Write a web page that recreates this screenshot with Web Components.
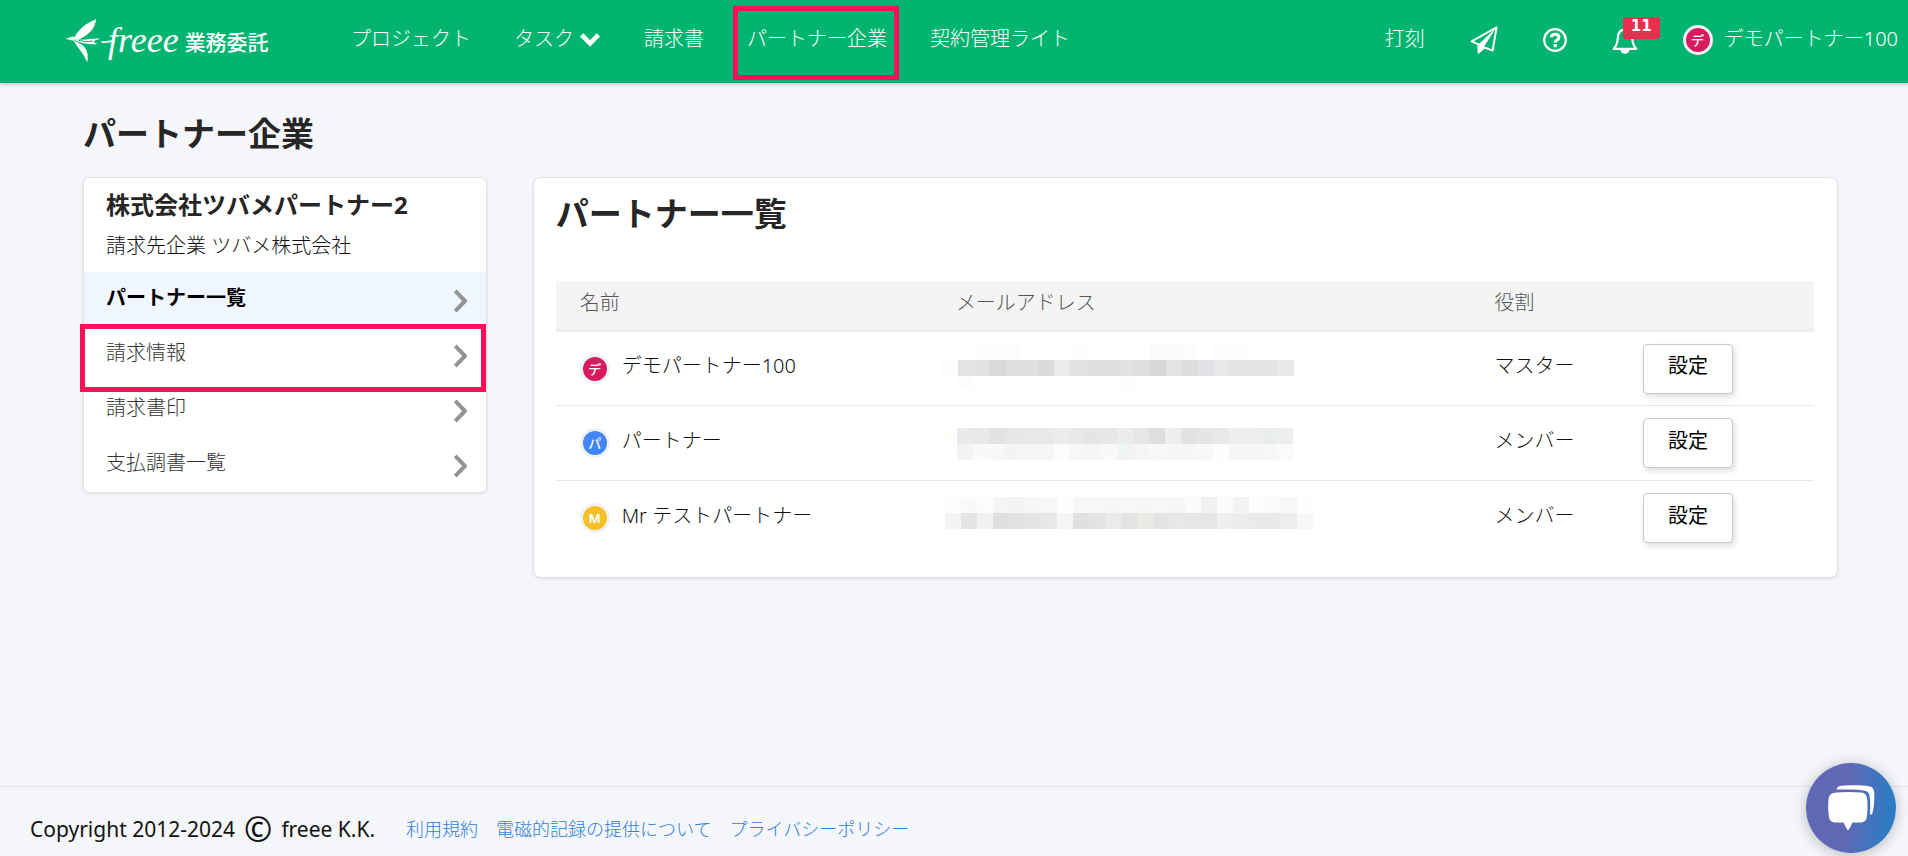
<!DOCTYPE html>
<html lang="ja">
<head>
<meta charset="utf-8">
<title>パートナー企業</title>
<style>
    :root {
        --green: #02b470;
        --mark: #ff0f59;
        --text: #111;
        --muted: #333;
        --line: #e8e8e8;
    }

    body {
        margin: 0;
        min-height: 100vh;
        display: flex;
        flex-direction: column;
        background: #f5f6fa;
        color: var(--text);
        font: 300 20px/30px "Noto Sans", "Noto Sans CJK JP", sans-serif;
    }

    main {
        flex: 1;
        padding: 32px 70px 32px 83px;
    }

    h1 {
        margin: 0 0 24px;
        color: #262626;
        font-size: 33px;
        line-height: 38px;
    }

    .columns {
        display: flex;
        align-items: flex-start;
        justify-content: space-between;
    }

    side-menu {
        flex: 0 0 23%;
    }

    content-card {
        flex: 1;
        margin-left: 46px;
    }
</style>
</head>
<body>
    <app-header>
        <nav-link>プロジェクト</nav-link>
        <nav-link dropdown>タスク</nav-link>
        <nav-link>請求書</nav-link>
        <nav-link marked>パートナー企業</nav-link>
        <nav-link>契約管理ライト</nav-link>
    </app-header>

    <main>
        <h1>パートナー企業</h1>
        <div class="columns">
            <side-menu>
                <span slot="title">株式会社ツバメパートナー2</span>
                <span slot="sub">請求先企業 ツバメ株式会社</span>
                <side-menu-item active>パートナー一覧</side-menu-item>
                <side-menu-item marked>請求情報</side-menu-item>
                <side-menu-item>請求書印</side-menu-item>
                <side-menu-item>支払調書一覧</side-menu-item>
            </side-menu>
            <content-card>
                <span slot="title">パートナー一覧</span>
                <partner-table></partner-table>
            </content-card>
        </div>
    </main>

    <app-footer></app-footer>
    <chat-launcher></chat-launcher>

<script>
/**
 * Small base class: every element sets its shadow root from template()
 */
class BaseElement extends HTMLElement {

    constructor() {
        super();
        this.attachShadow({ mode: 'open' });
    }

    connectedCallback() {
        this.shadowRoot.innerHTML = this.template();
    }
}

// icons, all drawn in currentColor
const ICONS = {
    down: {
        size: [22, 15],
        body: '<path d="M2.6 2.8 11 11.4 19.4 2.8" fill="none" stroke="currentColor" stroke-width="4.6"/>'
    },
    right: {
        size: [14, 22],
        body: '<path d="M2.6 2.4 11 11 2.6 19.6" fill="none" stroke="currentColor" stroke-width="4" stroke-linejoin="round" stroke-linecap="square"/>'
    },
    send: {
        size: [28, 28],
        body: `<path d="M1.6 15.4 26.6 1.4 22.6 24.6 14.4 21.4 8.6 26.6 8.4 18.4Z" fill="none" stroke="currentColor" stroke-width="2" stroke-linejoin="round"/>
            <path d="M8.4 18.6 26 2 13.4 21.4 8.8 27Z" fill="currentColor"/>`
    },
    help: {
        size: [24, 24],
        body: `<circle cx="12" cy="12" r="10.8" fill="none" stroke="currentColor" stroke-width="2.2"/>
            <path d="M8.2 9.4C8.4 7.2 10 6.2 12 6.2c2.3 0 4 1.2 4 3.2 0 2.6-3.8 2.7-3.8 5.2" fill="none" stroke="currentColor" stroke-width="3"/>
            <rect x="10.5" y="16" width="3.4" height="3.2" rx=".6" fill="currentColor"/>`
    },
    bell: {
        size: [26, 28],
        body: `<path d="M13 3.6c-5 0-7 3.6-7.2 8.4-.2 5-1.4 8-4 10.8h22.4c-2.6-2.8-3.8-5.8-4-10.8C20 7.2 18 3.6 13 3.6Z" fill="none" stroke="currentColor" stroke-width="2.2" stroke-linejoin="round"/>
            <path d="M13 1v3" stroke="currentColor" stroke-width="2.6" stroke-linecap="round"/>
            <path d="M8.4 23.4h9.2a4.6 4.3 0 0 1-9.2 0Z" fill="currentColor"/>`
    }
};

class UiIcon extends BaseElement {
    template() {
        const icon = ICONS[this.getAttribute('name')];
        const [w, h] = icon.size;
        return `
            <style>
                :host { display: inline-flex; flex: none; }
                svg { display: block; overflow: visible; }
            </style>
            <svg width="${w}" height="${h}" viewBox="0 0 ${w} ${h}" aria-hidden="true">${icon.body}</svg>
        `;
    }
}

class UserAvatar extends BaseElement {
    template() {
        return `
            <style>
                :host {
                    display: inline-flex;
                    flex: none;
                    align-items: center;
                    justify-content: center;
                    box-sizing: border-box;
                    width: 30px;
                    height: 30px;
                    border: 3px solid #f0f2f3;
                    border-radius: 50%;
                    background: ${this.getAttribute('color')};
                    color: #fff;
                    font-size: 13px;
                    font-weight: 500;
                    line-height: 20px;
                }
                :host([bold]) { font-weight: 700; }
            </style>
            <slot></slot>
        `;
    }
}

class BrandLogo extends BaseElement {
    template() {
        return `
            <style>
                :host { display: block; }
                a {
                    display: flex;
                    align-items: center;
                    color: #fff;
                    text-decoration: none;
                }
                svg { display: block; overflow: visible; }
                .script {
                    font: italic 36px/40px "Liberation Serif", serif;
                    margin-left: -6px;
                    padding-bottom: 3px;
                }
                .product {
                    font-size: 21px;
                    font-weight: 500;
                    line-height: 30px;
                    margin-left: 6px;
                }
            </style>
            <a href="#">
                <svg width="48" height="45" viewBox="18 32 144 135" aria-hidden="true">
                    <g fill="#fff">
                        <path d="M44 86C56 62 80 44 108 33 105 58 90 78 60 92L48 94Z"/>
                        <path d="M17 91 32 86Q42 82 48 90L42 97Q30 96 17 91Z"/>
                        <path d="M40 95C48 100 56 104 64 108 82 120 86 140 82 162 72 138 56 122 40 95Z"/>
                        <path d="M50 92C72 98 96 88 121 91 100 97 94 100 113 107 92 109 66 108 44 95Z"/>
                    </g>
                    <path d="M56 96Q76 103 98 98" fill="none" stroke="#02b470" stroke-width="3"/>
                    <path d="M124 101Q142 102 164 97" fill="none" stroke="#fff" stroke-width="5"/>
                </svg>
                <span class="script">freee</span>
                <span class="product">業務委託</span>
            </a>
        `;
    }
}

class NavLink extends BaseElement {
    template() {
        return `
            <style>
                :host { display: block; position: relative; }
                a {
                    display: flex;
                    align-items: center;
                    gap: 5px;
                    color: #fff;
                    text-decoration: none;
                    white-space: nowrap;
                }
                /* frame around the highlighted entry */
                :host([marked])::after {
                    content: "";
                    position: absolute;
                    inset: -18px -12px -26px -14px;
                    border: 5px solid var(--mark);
                    pointer-events: none;
                }
            </style>
            <a href="#"><slot></slot>${this.hasAttribute('dropdown') ? '<ui-icon name="down"></ui-icon>' : ''}</a>
        `;
    }
}

class AppHeader extends BaseElement {
    template() {
        return `
            <style>
                :host {
                    display: flex;
                    align-items: center;
                    box-sizing: border-box;
                    height: 83px;
                    padding: 0 10px 0 66px;
                    background: var(--green);
                    color: #fff;
                    box-shadow: 0 1px 4px rgba(0, 0, 0, .25);
                }
                brand-logo { width: 285px; }
                nav {
                    display: flex;
                    gap: 43px;
                    padding-bottom: 5px;
                }
                .tools {
                    display: flex;
                    align-items: center;
                    gap: 45px;
                    margin-left: auto;
                    padding-bottom: 4px;
                }
                a {
                    display: flex;
                    align-items: center;
                    color: inherit;
                    text-decoration: none;
                    white-space: nowrap;
                }
                .label { padding-bottom: 2px; }
                .bell { position: relative; }
                .badge {
                    position: absolute;
                    left: 11px;
                    top: -9px;
                    width: 37px;
                    height: 22px;
                    border-radius: 3px;
                    background: #e72f4e;
                    font: 700 15px/18px "DejaVu Sans", sans-serif;
                    text-align: center;
                }
                .user { gap: 11px; }
            </style>
            <brand-logo></brand-logo>
            <nav><slot></slot></nav>
            <div class="tools">
                <a href="#"><span class="label">打刻</span></a>
                <a href="#" aria-label="send"><ui-icon name="send"></ui-icon></a>
                <a href="#" aria-label="help"><ui-icon name="help"></ui-icon></a>
                <a href="#" class="bell"><ui-icon name="bell"></ui-icon><span class="badge">11</span></a>
                <a href="#" class="user">
                    <user-avatar color="#d81b60">デ</user-avatar>
                    <span class="label">デモパートナー100</span>
                </a>
            </div>
        `;
    }
}

class SideMenu extends BaseElement {
    template() {
        return `
            <style>
                :host {
                    display: block;
                    box-sizing: border-box;
                    border: 1px solid #e1e2e6;
                    border-radius: 6px;
                    background: #fff;
                    box-shadow: 0 1px 3px rgba(0, 0, 0, .1);
                }
                header { padding: 11px 22px 10px; }
                h2 {
                    margin: 0 0 9px;
                    color: #262626;
                    font-size: 24px;
                    line-height: 32px;
                }
                p { margin: 0; line-height: 32px; }
            </style>
            <header>
                <h2><slot name="title"></slot></h2>
                <p><slot name="sub"></slot></p>
            </header>
            <nav><slot></slot></nav>
        `;
    }
}

class SideMenuItem extends BaseElement {
    template() {
        return `
            <style>
                :host { display: block; position: relative; }
                a {
                    display: flex;
                    align-items: center;
                    justify-content: space-between;
                    box-sizing: border-box;
                    height: 55px;
                    padding: 3px 18px 0 22px;
                    color: var(--muted);
                    text-decoration: none;
                }
                span { padding-bottom: 6px; }
                ui-icon { color: #939393; }
                :host([active]) a {
                    background: #eff6ff;
                    color: #000;
                    font-weight: 700;
                }
                :host([marked]) { z-index: 1; }
                :host([marked])::after {
                    content: "";
                    position: absolute;
                    inset: -3px 0 -10px -4px;
                    border: 5px solid var(--mark);
                    pointer-events: none;
                }
            </style>
            <a href="#"><span><slot></slot></span><ui-icon name="right"></ui-icon></a>
        `;
    }
}

class ContentCard extends BaseElement {
    template() {
        return `
            <style>
                :host {
                    display: block;
                    box-sizing: border-box;
                    padding: 16px 23px 21px 22px;
                    border: 1px solid #e1e2e6;
                    border-radius: 8px;
                    background: #fff;
                    box-shadow: 0 1px 3px rgba(0, 0, 0, .1);
                }
                h2 {
                    margin: 0 0 47px;
                    color: #262626;
                    font-size: 33px;
                    line-height: 40px;
                }
            </style>
            <h2><slot name="title"></slot></h2>
            <slot></slot>
        `;
    }
}

/**
 * Mosaic over a hidden mail address.
 * Each row of tiles is a list of hex colours, "." leaves a tile out.
 */
const MOSAICS = [
    {
        x: 0, y: 0,
        rows: [
            '. . fdfdfd fcfcfc fcfcfc . . . fdfdfd . . . . fafafa fbfbfb fcfcfa . fcfcfc fcfefe',
            'fcfcfa e3e3e3 e2e2e2 d9d9d9 dfdfdf dfdfdf dddbda eaecee e3e2e0 dee1e0 dfdfdd dfe2e1 dedede d8d8d8 e5e4e2 dddddd e0e2e5 e8e8e8 e5e5e5 e5e5e5 e5e5e5 e7e9eb',
            '. fcfcfc . . . . . . . . . fdfdfd'
        ]
    },
    {
        x: -1, y: 10,
        rows: [
            'fefefb eaeaea e8e8e8 e3e2e0 e4e6e8 e8e8e6 e8e8e8 ececec e9e9e7 e5e5e5 e7e7e5 eaedec e6e6e6 dfdfdd eeeeee e2e2e2 e5e5e5 e9e9e9 eeeeee eeeeee e9edec edefee',
            '. f4f4f4 f9f9f9 f8f8f6 f4f4f4 f6f6f6 f6f6f6 fcfcfc f7f7f7 f6f6f6 f9f9f9 f0f4f2 f5f5f5 f8f8f8 f6f6f6 f6f6f6 f8f8f8 fbfefd f6f6f4 f6f6f6 f7f7f7 fafafa'
        ]
    },
    {
        x: 3, y: 4,
        rows: [
            'fdfdfd f9f9f9 fcfcfc f4f6f5 f3f3f3 f6f6f6 f6f8fa fefefe f7f7f7 f7f7f7 f6f6f6 f7f7f7 f8f6f5 f5f8f7 f6f6f6 fbfbfb eff2f1 fbfbfb f3f3f3 fdfdfd fafafa f7f7f7 fefefe',
            'f4f4f4 e4e4e4 f1f1f1 e0e0e0 e3e2e0 e5e5e3 e6e8ea f5f5f5 e0e0de e3e3e3 ebebeb e3e3e3 ebeae7 e4e4e4 e6e8ea e7e7e7 e4e7e6 efefed ececec eaeaea eaeaea edefee f6f8f7'
        ]
    }
];

class MaskedAddress extends BaseElement {
    template() {
        const mosaic = MOSAICS[this.getAttribute('index')];
        const tile = 16;
        let rects = '';
        mosaic.rows.forEach((row, r) => {
            row.split(' ').forEach((color, c) => {
                if (color === '.') return;
                rects += `<rect x="${mosaic.x + c * tile}" y="${mosaic.y + r * tile}" width="${tile}" height="${r === 2 ? 14 : tile}" fill="#${color}"/>`;
            });
        });
        return `
            <style>
                :host { display: block; }
                svg { display: block; overflow: visible; }
            </style>
            <svg width="371" height="50" shape-rendering="crispEdges" aria-hidden="true">${rects}</svg>
        `;
    }
}

class AppButton extends BaseElement {
    template() {
        return `
            <style>
                :host { display: block; }
                button {
                    display: block;
                    height: 50px;
                    padding: 0 24px 5px;
                    border: 1px solid #c8c8c8;
                    border-radius: 4px;
                    background: #fff;
                    box-shadow: 2px 3px 6px rgba(0, 0, 0, .13);
                    color: #000;
                    font: inherit;
                    font-weight: 400;
                    white-space: nowrap;
                }
            </style>
            <button type="button"><slot></slot></button>
        `;
    }
}

class PartnerTable extends BaseElement {

    constructor() {
        super();
        this.partners = [
            { initial: 'デ', color: '#d81b60', name: 'デモパートナー100', role: 'マスター' },
            { initial: 'パ', color: '#4285f4', name: 'パートナー', role: 'メンバー' },
            { initial: 'M', color: '#f6bf26', name: 'Mr テストパートナー', role: 'メンバー', bold: true }
        ];
    }

    template() {
        const rows = this.partners.map((p, i) => `
            <tr>
                <td>
                    <div class="name">
                        <user-avatar color="${p.color}" ${p.bold ? 'bold' : ''}>${p.initial}</user-avatar>
                        <span class="text">${p.name}</span>
                    </div>
                </td>
                <td class="mail"><masked-address index="${i}"></masked-address></td>
                <td><span class="text">${p.role}</span></td>
                <td><app-button>設定</app-button></td>
            </tr>
        `).join('');

        return `
            <style>
                :host { display: block; }
                table {
                    width: 100%;
                    table-layout: fixed;
                    border-collapse: separate;
                    border-spacing: 0;
                }
                th {
                    box-sizing: border-box;
                    height: 51px;
                    padding: 0 0 5px 24px;
                    border-bottom: 3px solid #ededed;
                    background: #f4f4f4;
                    color: #555;
                    font-weight: inherit;
                    text-align: left;
                }
                td {
                    box-sizing: border-box;
                    height: 75px;
                    padding: 0 0 0 24px;
                    border-bottom: 1px solid var(--line);
                }
                tbody tr:first-child td { height: 74px; }
                tr:last-child td { border-bottom-color: transparent; }
                td.mail { padding-left: 10px; }
                .name {
                    display: flex;
                    align-items: center;
                    gap: 12px;
                }
                .text { display: block; padding-bottom: 5px; }
                .c1 { width: 29.9%; }
                .c2 { width: 42.8%; }
                .c3 { width: 11.8%; }
            </style>
            <table>
                <colgroup><col class="c1"><col class="c2"><col class="c3"><col></colgroup>
                <thead>
                    <tr><th>名前</th><th>メールアドレス</th><th>役割</th><th></th></tr>
                </thead>
                <tbody>${rows}</tbody>
            </table>
        `;
    }
}

class AppFooter extends BaseElement {
    template() {
        return `
            <style>
                :host {
                    display: flex;
                    align-items: center;
                    box-sizing: border-box;
                    height: 70px;
                    padding: 15px 30px 0;
                    border-top: 1px solid #e3e4e8;
                }
                .copy {
                    display: flex;
                    align-items: center;
                    gap: 9px;
                    font-size: 21px;
                    font-weight: 400;
                }
                .mark { font-size: 34px; line-height: 30px; }
                nav {
                    display: flex;
                    gap: 18px;
                    margin-left: 31px;
                    font-size: 18px;
                }
                a { color: #2f7fe0; text-decoration: none; }
            </style>
            <span class="copy"><span>Copyright 2012-2024</span><span class="mark">©</span><span>freee K.K.</span></span>
            <nav>
                <a href="#">利用規約</a>
                <a href="#">電磁的記録の提供について</a>
                <a href="#">プライバシーポリシー</a>
            </nav>
        `;
    }
}

class ChatLauncher extends BaseElement {
    template() {
        return `
            <style>
                :host {
                    position: fixed;
                    right: 12px;
                    bottom: 3px;
                }
                button {
                    display: block;
                    width: 90px;
                    height: 90px;
                    padding: 0;
                    border: 0;
                    border-radius: 50%;
                    background: linear-gradient(95deg, #6068b5 45%, #2d7cc3 90%);
                    box-shadow: 0 2px 14px rgba(0, 0, 0, .25);
                }
                svg { display: block; }
            </style>
            <button type="button" aria-label="chat">
                <svg width="90" height="90" viewBox="0 0 90 90" fill="#fff" aria-hidden="true">
                    <path d="M30.5 26.5C31 23.5 34 23 38 22.6 46 22 56 22 63 23.2 67 24 68 26 68.2 30 68.6 37 68 44 66.5 50 65.8 52.5 64 52.2 64 50 64.4 44 64.5 38 63.4 32 62.6 28.5 60 27.6 56 27.2 48 26.3 38 26.6 30.5 26.5Z"/>
                    <path d="M30 29.6C38 28.8 47 28.8 55 29.6 59 30 60.8 32 61.2 36 61.8 42 61.6 48 60.8 54 60.2 58 58 59.4 54 59.6H46.5L43.5 65.5Q42 68.5 40.5 65.5L37.5 59.6H30C26 59.4 23.6 58 23 54 22 48 22 42 22.6 36 23 32 25.5 30 30 29.6Z"/>
                </svg>
            </button>
        `;
    }
}

customElements.define('ui-icon', UiIcon);
customElements.define('user-avatar', UserAvatar);
customElements.define('brand-logo', BrandLogo);
customElements.define('nav-link', NavLink);
customElements.define('app-header', AppHeader);
customElements.define('side-menu', SideMenu);
customElements.define('side-menu-item', SideMenuItem);
customElements.define('content-card', ContentCard);
customElements.define('masked-address', MaskedAddress);
customElements.define('app-button', AppButton);
customElements.define('partner-table', PartnerTable);
customElements.define('app-footer', AppFooter);
customElements.define('chat-launcher', ChatLauncher);
</script>
</body>
</html>
